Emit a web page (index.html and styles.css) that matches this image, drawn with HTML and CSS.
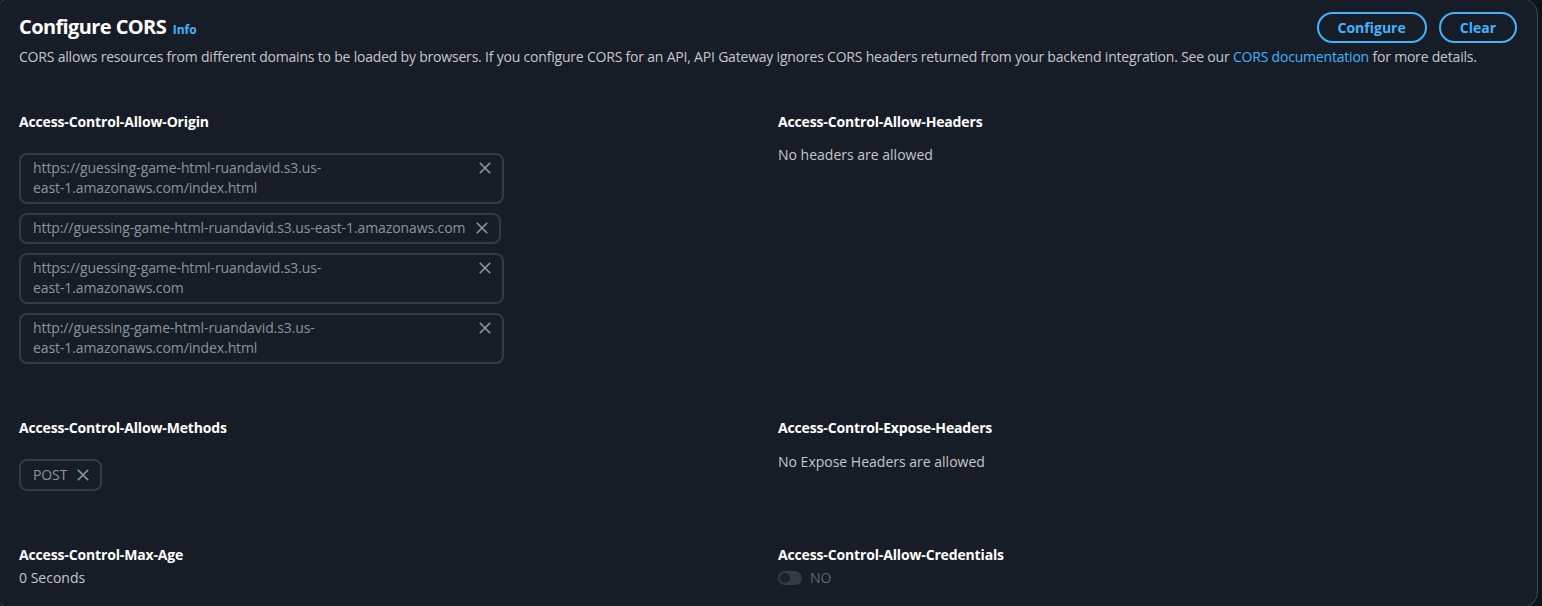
FILE: index.html
```html
<!DOCTYPE html>
<html>
<head>
<meta charset="utf-8">
<link rel="stylesheet" href="styles.css">
</head>
<body>
<div class="card">
  <div class="header">
    <h2 class="title">Configure CORS <a class="info">Info</a></h2>
    <div class="actions">
      <button class="btn">Configure</button>
      <button class="btn">Clear</button>
    </div>
  </div>
  <p class="desc">CORS allows resources from different domains to be loaded by browsers. If you configure CORS for an API, API Gateway ignores CORS headers returned from your backend integration. See our <a class="link">CORS documentation</a> for more details.</p>

  <div class="grid">
    <div class="field">
      <div class="label">Access-Control-Allow-Origin</div>
      <div class="tokens">
        <div class="token"><span class="token-text">https://guessing-game-html-ruandavid.s3.us-<span class="nb">east-1.amazonaws.com/index.html</span></span><svg class="x" viewBox="0 0 16 16"><path d="M2 2l12 12M14 2L2 14"/></svg></div>
        <div class="token"><span class="token-text">http://guessing-game-html-ruandavid.s3.us-east-1.amazonaws.com</span><svg class="x" viewBox="0 0 16 16"><path d="M2 2l12 12M14 2L2 14"/></svg></div>
        <div class="token"><span class="token-text">https://guessing-game-html-ruandavid.s3.us-<span class="nb">east-1.amazonaws.com</span></span><svg class="x" viewBox="0 0 16 16"><path d="M2 2l12 12M14 2L2 14"/></svg></div>
        <div class="token"><span class="token-text">http://guessing-game-html-ruandavid.s3.us-<span class="nb">east-1.amazonaws.com/index.html</span></span><svg class="x" viewBox="0 0 16 16"><path d="M2 2l12 12M14 2L2 14"/></svg></div>
      </div>
    </div>
    <div class="field">
      <div class="label">Access-Control-Allow-Headers</div>
      <div class="value">No headers are allowed</div>
    </div>

    <div class="field row2">
      <div class="label">Access-Control-Allow-Methods</div>
      <div class="tokens methods">
        <div class="token small"><span class="token-text">POST</span><svg class="x" viewBox="0 0 16 16"><path d="M2 2l12 12M14 2L2 14"/></svg></div>
      </div>
    </div>
    <div class="field row2">
      <div class="label">Access-Control-Expose-Headers</div>
      <div class="value">No Expose Headers are allowed</div>
    </div>

    <div class="field compact">
      <div class="label">Access-Control-Max-Age</div>
      <div class="value">0 Seconds</div>
    </div>
    <div class="field compact">
      <div class="label">Access-Control-Allow-Credentials</div>
      <div class="toggle-row"><span class="toggle"><span class="knob"></span></span><span class="toggle-label">NO</span></div>
    </div>
  </div>
</div>
</body>
</html>
```

FILE: styles.css
```css
* { box-sizing: border-box; }
html, body { height: 100%; }
body {
  margin: 0;
  background: #0f141a;
  font-family: "Open Sans", "Noto Sans", Arial, sans-serif;
  font-size: 14px;
  color: #c6c6cd;
  overflow: hidden;
}
.card {
  margin: -2px 4px 0 -6px;
  height: 610px;
  background: #161d26;
  border: 1px solid #424650;
  border-radius: 16px;
  padding: 12px 20px 0 24px;
}
.header {
  display: flex;
  justify-content: space-between;
  align-items: flex-start;
}
.title {
  margin: 3px 0 0;
  font-size: 20px;
  font-weight: 700;
  line-height: 26px;
  color: #ffffff;
  letter-spacing: -0.6px;
}
.info {
  font-size: 12px;
  font-weight: 700;
  color: #42b4ff;
  margin-left: 2px;
  letter-spacing: 0;
}
.desc {
  margin: 4px 0 0;
  line-height: 20px;
  letter-spacing: -0.2px;
}
.link { color: #42b4ff; }
.actions {
  display: flex;
  gap: 12px;
  flex-shrink: 0;
  margin-top: 1px;
}
.btn {
  font-family: inherit;
  font-size: 14px;
  font-weight: 700;
  color: #42b4ff;
  background: transparent;
  border: 2px solid #42b4ff;
  border-radius: 20px;
  height: 31px;
  padding: 0 19px;
}
.grid {
  display: grid;
  grid-template-columns: 1fr 1fr;
  column-gap: 20px;
  margin-top: 46px;
}
.field { padding-bottom: 55px; }
.field.row2 { padding-bottom: 55px; }
.field.compact { padding-bottom: 0; }
.label {
  font-weight: 700;
  color: #ffffff;
  line-height: 18px;
  letter-spacing: -0.15px;
}
.value {
  margin-top: 14px;
  line-height: 20px;
}
.field.row2 .value { margin-top: 15px; }
.tokens {
  margin-top: 22px;
  display: flex;
  flex-direction: column;
  align-items: flex-start;
  gap: 9px;
}
.tokens.methods { margin-top: 22px; }
.token {
  display: flex;
  align-items: flex-start;
  max-width: 485px;
  border: 2px solid #333a45;
  border-radius: 8px;
  padding: 3px 10px 4px 12px;
  color: #8d939c;
}
.token-text {
  line-height: 20px;
  letter-spacing: -0.1px;
  padding-right: 10px;
}
.nb { white-space: nowrap; }
.x {
  flex-shrink: 0;
  width: 14px;
  height: 14px;
  margin-top: 3px;
  stroke: #8d939c;
  stroke-width: 2;
  fill: none;
}
.token.small { padding: 4px 10px 4px 12px; }
.token.small .token-text { padding-right: 9px; }
.field.compact .value { margin-top: 4px; }
.toggle-row {
  margin-top: 4px;
  display: flex;
  align-items: center;
  gap: 8px;
}
.toggle {
  width: 24px;
  height: 14px;
  border-radius: 7px;
  background: #333a43;
  position: relative;
  display: inline-block;
}
.knob {
  position: absolute;
  left: 2px;
  top: 2px;
  width: 10px;
  height: 10px;
  border-radius: 50%;
  background: #1b2129;
}
.toggle-label { color: #5f6670; }
```
